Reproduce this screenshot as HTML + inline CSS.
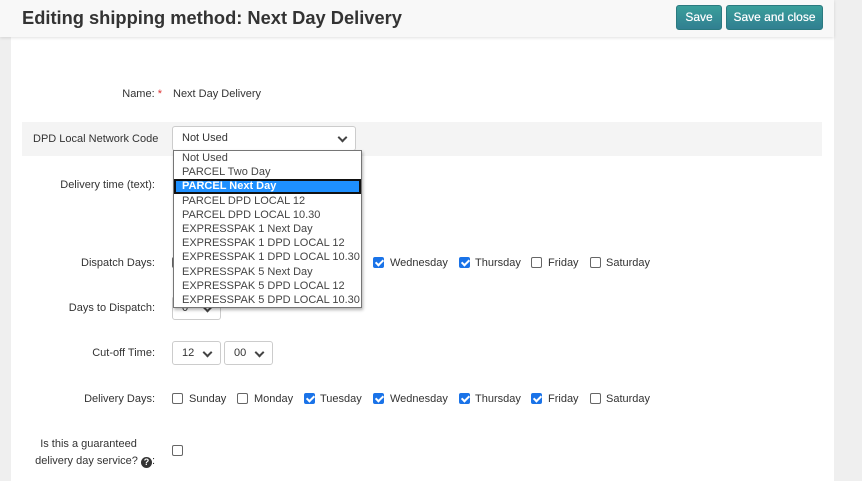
<!DOCTYPE html>
<html><head><meta charset="utf-8"><style>
*{box-sizing:border-box;margin:0;padding:0}
body{width:862px;height:481px;overflow:hidden;background:#efefef;font-family:"Liberation Sans",sans-serif;font-size:11px;color:#333;position:relative}
.a{position:absolute;white-space:nowrap}
#content{position:absolute;left:11px;top:36px;width:823px;height:445px;background:#fff}
#hdr{position:absolute;left:0;top:0;width:834px;height:37px;background:#f8f8f8;box-shadow:0 1px 3px rgba(0,0,0,.12)}
.btn{position:absolute;top:5px;height:25px;border-radius:3px;background:linear-gradient(#3a9f9b,#317f91);border:1px solid #2b7a80;color:#fff;font-size:12px;text-align:center;line-height:23px;text-shadow:0 0 0.5px #fff}
.lbl{position:absolute;right:707px;text-align:right;white-space:nowrap}
.sel{position:absolute;border:1px solid #ccc;border-radius:3px;background:#fff;height:24px;line-height:22px;padding-left:9px}
.chev{position:absolute;top:7px;width:7px;height:7px;border-right:2px solid #444;border-bottom:2px solid #444;transform:rotate(45deg)}
.cb{position:absolute;width:11px;height:11px;border:1px solid #666;border-radius:2px;background:#fff}
.cb.on{background:#1a73e8;border-color:#1a73e8}
.cb.on:after{content:"";position:absolute;left:3px;top:0px;width:3px;height:6px;border-right:2px solid #fff;border-bottom:2px solid #fff;transform:rotate(45deg)}
#dd{position:absolute;left:173px;top:150px;width:189px;height:158px;background:#fff;border:1px solid #767676;box-shadow:1px 2px 3px rgba(0,0,0,.3);font-size:11px;color:#444}
#dd div{height:14.2px;line-height:14px;padding-left:8px;white-space:nowrap;overflow:hidden}
#dd .hl{background:#1e90ff;color:#fff;outline:2px solid #111;outline-offset:-2px;font-weight:bold}
</style></head><body>
<div id="content"></div>
<div id="hdr"></div>
<div class="a" style="left:22px;top:7px;font-size:18.3px;font-weight:bold;color:#333">Editing shipping method: Next Day Delivery</div>
<div class="btn" style="left:676px;width:46px">Save</div>
<div class="btn" style="left:726px;width:97px">Save and close</div>

<div class="lbl" style="top:88px;right:700px">Name: <span style="color:#d33">*</span></div>
<div class="a" style="left:173px;top:88px">Next Day Delivery</div>

<div class="a" style="left:22px;top:122px;width:800px;height:34px;background:#f4f4f4"></div>
<div class="a" style="left:33px;top:133px">DPD Local Network Code</div>
<div class="sel" style="left:172px;top:126px;width:184px;height:25px">Not Used<span class="chev" style="left:166px"></span></div>

<div class="lbl" style="top:179px">Delivery time (text):</div>

<div class="lbl" style="top:257px">Dispatch Days:</div>
<div class="cb" style="left:172px;top:257px"></div>
<div class="cb on" style="left:373px;top:257px"></div><div class="a" style="left:390px;top:257px">Wednesday</div>
<div class="cb on" style="left:459px;top:257px"></div><div class="a" style="left:475px;top:257px">Thursday</div>
<div class="cb" style="left:531px;top:257px"></div><div class="a" style="left:548px;top:257px">Friday</div>
<div class="cb" style="left:590px;top:257px"></div><div class="a" style="left:606px;top:257px">Saturday</div>

<div class="lbl" style="top:302px">Days to Dispatch:</div>
<div class="sel" style="left:172px;top:296px;width:49px">0<span class="chev" style="left:31px"></span></div>

<div class="lbl" style="top:347px">Cut-off Time:</div>
<div class="sel" style="left:172px;top:341px;width:49px">12<span class="chev" style="left:31px"></span></div>
<div class="sel" style="left:224px;top:341px;width:49px">00<span class="chev" style="left:31px"></span></div>

<div class="lbl" style="top:393px">Delivery Days:</div>
<div class="cb" style="left:172px;top:393px"></div><div class="a" style="left:189px;top:393px">Sunday</div>
<div class="cb" style="left:237px;top:393px"></div><div class="a" style="left:254px;top:393px">Monday</div>
<div class="cb on" style="left:304px;top:393px"></div><div class="a" style="left:320px;top:393px">Tuesday</div>
<div class="cb on" style="left:373px;top:393px"></div><div class="a" style="left:390px;top:393px">Wednesday</div>
<div class="cb on" style="left:459px;top:393px"></div><div class="a" style="left:475px;top:393px">Thursday</div>
<div class="cb on" style="left:531px;top:393px"></div><div class="a" style="left:548px;top:393px">Friday</div>
<div class="cb" style="left:590px;top:393px"></div><div class="a" style="left:606px;top:393px">Saturday</div>

<div class="a" style="left:37px;top:438px;width:103px;text-align:center">Is this a guaranteed</div>
<div class="lbl" style="top:455px">delivery day service? <span style="display:inline-block;width:11px;height:11px;border-radius:50%;background:#333;color:#fff;font-size:9px;font-weight:bold;text-align:center;line-height:11px;vertical-align:-1px">?</span>:</div>
<div class="cb" style="left:172px;top:445px"></div>

<div id="dd">
<div>Not Used</div>
<div>PARCEL Two Day</div>
<div class="hl">PARCEL Next Day</div>
<div>PARCEL DPD LOCAL 12</div>
<div>PARCEL DPD LOCAL 10.30</div>
<div>EXPRESSPAK 1 Next Day</div>
<div>EXPRESSPAK 1 DPD LOCAL 12</div>
<div>EXPRESSPAK 1 DPD LOCAL 10.30</div>
<div>EXPRESSPAK 5 Next Day</div>
<div>EXPRESSPAK 5 DPD LOCAL 12</div>
<div>EXPRESSPAK 5 DPD LOCAL 10.30</div>
</div>
</body></html>
